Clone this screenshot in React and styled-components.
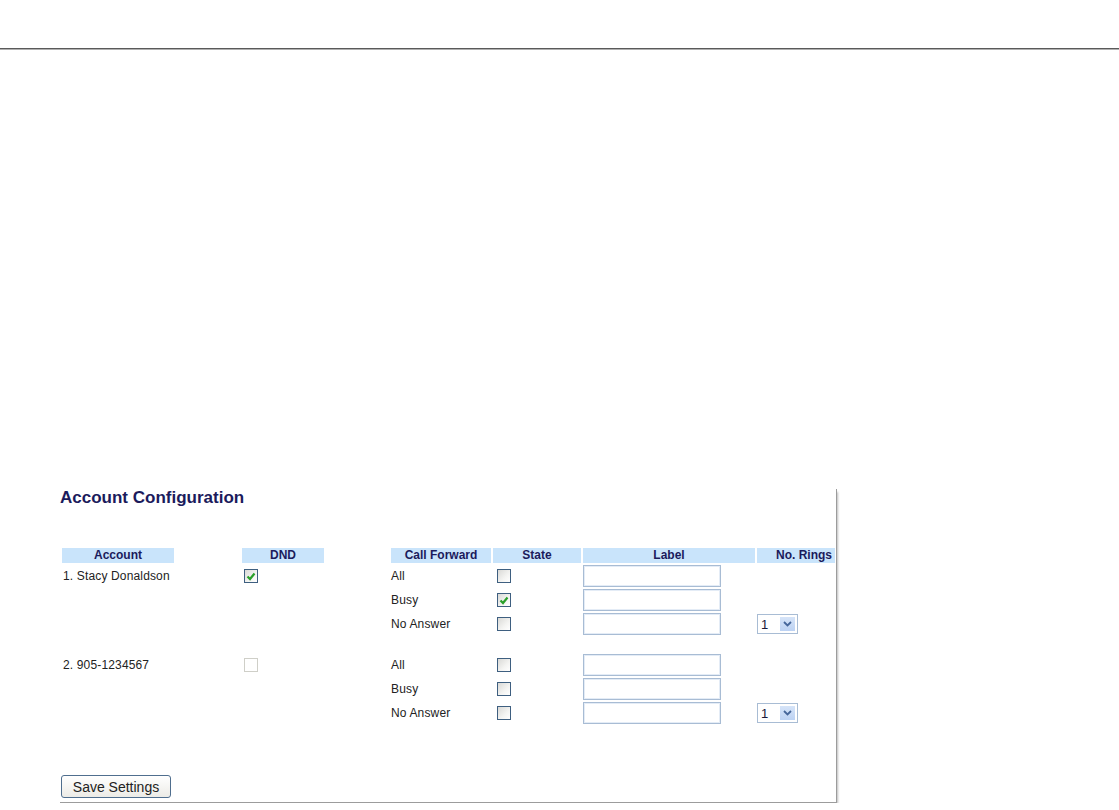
import React from 'react';
import styled, { createGlobalStyle } from 'styled-components';

const GlobalStyle = createGlobalStyle`
  html, body {
    margin: 0;
    padding: 0;
    background: #fff;
    font-family: "Liberation Sans", Arial, sans-serif;
  }
`;

const TopBar = styled.div`
  height: 48px;
  border-bottom: 1px solid #5a5a5a;
  box-shadow: 0 1px 0 #b0b0b0;
`;

const Panel = styled.form`
  box-sizing: border-box;
  width: 777px;
  margin: 440px 0 0 60px;
  padding: 0 0 4px 0;
  border-right: 1px solid #9c9c9c;
  border-bottom: 1px solid #9c9c9c;
  box-shadow: 2px 2px 2px -1px #bdbdbd;
`;

const Title = styled.h2`
  margin: 0 0 41px 0;
  font-size: 17px;
  line-height: 18px;
  font-weight: bold;
  color: #1b1b5c;
`;

const Grid = styled.div`
  display: grid;
  grid-template-columns: 112px 64px 82px 63px 100px 88px 172px 78px;
  column-gap: 2px;
  row-gap: 2px;
  padding-left: 2px;
  font-size: 12px;
  color: #222;
`;

const Head = styled.div`
  height: 15px;
  line-height: 15px;
  font-weight: bold;
  color: #1b1b5c;
  background: ${p => (p.$blank ? 'transparent' : '#c9e4fb')};
  text-align: ${p => p.$align || 'center'};
  padding-right: ${p => (p.$align === 'right' ? '3px' : '0')};
  white-space: nowrap;
`;

const Cell = styled.div`
  height: ${p => (p.$spacer ? '15px' : '22px')};
  display: flex;
  align-items: center;
  padding-left: ${p => p.$pad || 0}px;
  white-space: nowrap;
  letter-spacing: 0.15px;
`;

const Box = styled.span`
  box-sizing: border-box;
  width: 14px;
  height: 14px;
  display: inline-flex;
  align-items: center;
  justify-content: center;
  border: 1px solid ${p => (p.$disabled ? '#cfcfc8' : '#3e5f80')};
  background: ${p => (p.$disabled ? '#fff' : 'linear-gradient(135deg, #d9d9d6 0%, #f4f4f2 60%, #fff 100%)')};
`;

const LabelInput = styled.input`
  box-sizing: border-box;
  width: 138px;
  height: 22px;
  margin: 0;
  border: 1px solid #a8bcd4;
  box-shadow: inset 0 0 0 1px #e4ecf6;
  font: inherit;
  outline: none;
`;

const SelectWrap = styled.div`
  position: relative;
  box-sizing: border-box;
  width: 41px;
  height: 20px;
  border: 1px solid #a8bcd4;
  background: #fff;
`;

const RingSelect = styled.select`
  appearance: none;
  border: 0;
  background: transparent;
  width: 100%;
  height: 100%;
  margin: 0;
  padding: 0 0 0 3px;
  font-family: "Liberation Sans", Arial, sans-serif;
  font-size: 13px;
  color: #1a1a3a;
  outline: none;
`;

const Arrow = styled.span`
  position: absolute;
  right: 2px;
  top: 2px;
  width: 15px;
  height: 14px;
  display: flex;
  align-items: center;
  justify-content: center;
  background: linear-gradient(#d6e4f8, #bcd2f3);
  pointer-events: none;
`;

const SaveButton = styled.button`
  box-sizing: border-box;
  margin: 51px 0 0 1px;
  width: 110px;
  height: 23px;
  border: 1px solid #4f6e8e;
  border-radius: 3px;
  background: linear-gradient(#ffffff, #ecebe6);
  font-family: "Liberation Sans", Arial, sans-serif;
  font-size: 14px;
  color: #222;
  padding: 0;
`;

const Check = ({ checked, disabled }) => (
  <Box $disabled={disabled}>
    {checked && (
      <svg width="10" height="9" viewBox="0 0 10 9">
        <path d="M1.5 4.5 L4 7 L8.5 1.5" fill="none" stroke="#2aa02a" strokeWidth="2.2" />
      </svg>
    )}
  </Box>
);

const Rings = () => (
  <SelectWrap>
    <RingSelect defaultValue="1">
      {[1, 2, 3, 4, 5, 6].map(n => <option key={n}>{n}</option>)}
    </RingSelect>
    <Arrow>
      <svg width="9" height="6" viewBox="0 0 9 6">
        <path d="M1 1 L4.5 4.5 L8 1" fill="none" stroke="#45669a" strokeWidth="1.8" />
      </svg>
    </Arrow>
  </SelectWrap>
);

const accounts = [
  { name: '1. Stacy Donaldson', dnd: true, dndDisabled: false, states: [false, true, false] },
  { name: '2. 905-1234567', dnd: false, dndDisabled: true, states: [false, false, false] },
];

const forwards = ['All', 'Busy', 'No Answer'];

export default function App() {
  return (
    <>
      <GlobalStyle />
      <TopBar />
      <Panel onSubmit={e => e.preventDefault()}>
        <Title>Account Configuration</Title>
        <Grid>
          <Head>Account</Head>
          <Head $blank />
          <Head>DND</Head>
          <Head $blank />
          <Head>Call Forward</Head>
          <Head>State</Head>
          <Head>Label</Head>
          <Head $align="right">No. Rings</Head>

          {accounts.map((acc, ai) => (
            <React.Fragment key={acc.name}>
              {ai > 0 && Array.from({ length: 8 }).map((_, i) => <Cell key={'s' + i} $spacer />)}
              {forwards.map((fw, fi) => (
                <React.Fragment key={fw}>
                  <Cell $pad={1}>{fi === 0 ? acc.name : ''}</Cell>
                  <Cell />
                  <Cell $pad={2}>
                    {fi === 0 && <Check checked={acc.dnd} disabled={acc.dndDisabled} />}
                  </Cell>
                  <Cell />
                  <Cell>{fw}</Cell>
                  <Cell $pad={4}><Check checked={acc.states[fi]} /></Cell>
                  <Cell><LabelInput type="text" /></Cell>
                  <Cell>{fi === 2 && <Rings />}</Cell>
                </React.Fragment>
              ))}
            </React.Fragment>
          ))}
        </Grid>
        <SaveButton type="submit">Save Settings</SaveButton>
      </Panel>
    </>
  );
}
